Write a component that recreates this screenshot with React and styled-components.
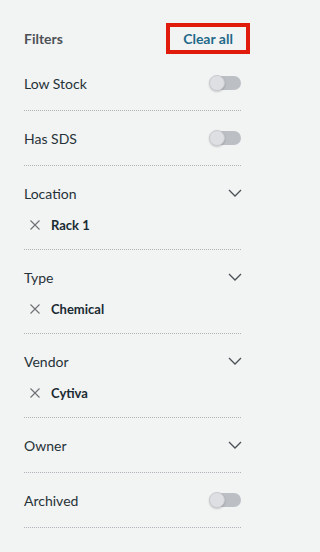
import React from "react";
import styled, { createGlobalStyle } from "styled-components";

const Global = createGlobalStyle`
  html, body { margin: 0; padding: 0; background: #f2f3f3; }
  body { font-family: Lato, "Open Sans", "Liberation Sans", sans-serif; -webkit-font-smoothing: antialiased; }
  * { box-sizing: border-box; }
`;

const Panel = styled.aside`
  width: 267px;
  min-height: 552px;
  background: #f2f3f3;
  padding: 0 26px 0 24px;
  display: flex;
  flex-direction: column;
`;

const Header = styled.div`
  height: 56px;
  padding-top: 23px;
  display: flex;
  align-items: flex-start;
  justify-content: space-between;
`;

const Title = styled.h2`
  margin: 0;
  height: 31px;
  display: flex;
  align-items: center;
  font-size: 14px;
  font-weight: 700;
  color: #4d5257;
`;

const ClearButton = styled.button`
  height: 31px;
  width: 84px;
  margin-right: -9px;
  border: 4px solid #e01b0c;
  background: transparent;
  font-family: inherit;
  font-size: 14px;
  font-weight: 700;
  color: #1e6a8a;
  padding: 0 0 0 0;
  cursor: pointer;
`;

const Section = styled.div`
  padding: ${(p) => (p.$hasValue ? "17px 0 14px" : "17px 0")};
  border-bottom: 1px dotted #aeb3b7;
  display: flex;
  flex-direction: column;
  gap: 12px;
`;

const Row = styled.div`
  height: 20px;
  display: flex;
  align-items: center;
  justify-content: space-between;
`;

const Label = styled.span`
  font-size: 14px;
  color: #263238;
`;

const ValueRow = styled.div`
  height: 20px;
  display: flex;
  align-items: center;
  padding-left: 6px;
  gap: 11px;
`;

const Value = styled.span`
  font-size: 13px;
  font-weight: 700;
  color: #1a2b33;
`;

const Track = styled.span`
  position: relative;
  width: 32px;
  height: 16px;
  display: inline-block;
`;

const TrackBar = styled.span`
  position: absolute;
  left: 3px;
  right: 0;
  top: 1px;
  bottom: 1px;
  border-radius: 8px;
  background: #bcc0c5;
`;

const Knob = styled.span`
  position: absolute;
  left: 0;
  top: 0;
  width: 16px;
  height: 16px;
  border-radius: 50%;
  background: #dddfe3;
  border: 1px solid #c8ccd0;
  box-shadow: 0 1px 2px rgba(0, 0, 0, 0.18);
`;

const Toggle = () => (
  <Track>
    <TrackBar />
    <Knob />
  </Track>
);

const Chevron = () => (
  <svg width="14" height="8" viewBox="0 0 14 8" fill="none" style={{ marginRight: -0.5 }}>
    <path d="M1 1L7 7L13 1" stroke="#4a5056" strokeWidth="1.3" />
  </svg>
);

const Cross = () => (
  <svg width="10" height="10" viewBox="0 0 10 10" fill="none">
    <path d="M0.5 0.5L9.5 9.5M9.5 0.5L0.5 9.5" stroke="#6c7176" strokeWidth="1.1" />
  </svg>
);

const filters = [
  { label: "Low Stock", type: "toggle" },
  { label: "Has SDS", type: "toggle" },
  { label: "Location", type: "select", value: "Rack 1" },
  { label: "Type", type: "select", value: "Chemical" },
  { label: "Vendor", type: "select", value: "Cytiva" },
  { label: "Owner", type: "select" },
  { label: "Archived", type: "toggle" },
];

export default function App() {
  return (
    <>
      <Global />
      <Panel>
        <Header>
          <Title>Filters</Title>
          <ClearButton>Clear all</ClearButton>
        </Header>
        {filters.map((f) => (
          <Section key={f.label} $hasValue={!!f.value}>
            <Row>
              <Label>{f.label}</Label>
              {f.type === "toggle" ? <Toggle /> : <Chevron />}
            </Row>
            {f.value && (
              <ValueRow>
                <Cross />
                <Value>{f.value}</Value>
              </ValueRow>
            )}
          </Section>
        ))}
      </Panel>
    </>
  );
}
